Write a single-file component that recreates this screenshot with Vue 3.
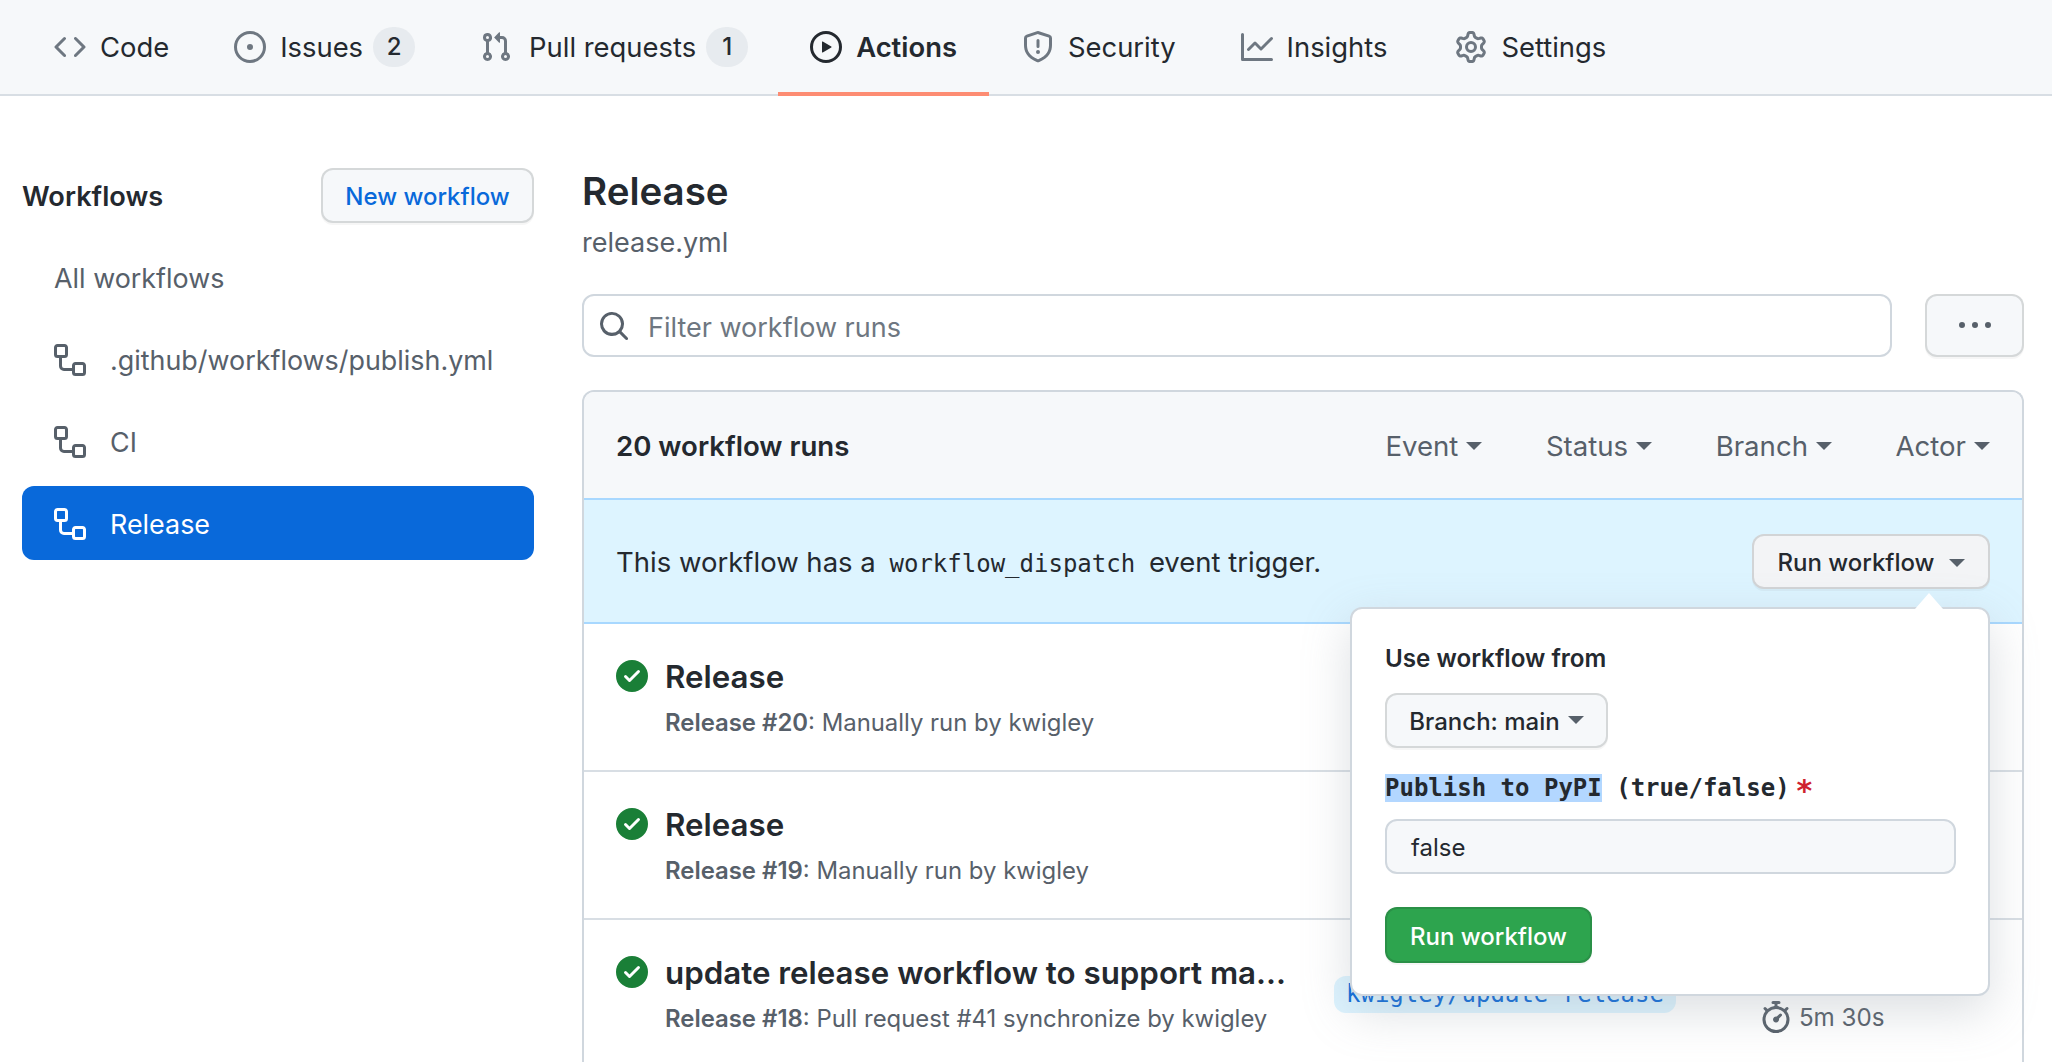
<script setup>
const icons = {
  code: 'm11.28 3.22 4.25 4.25a.75.75 0 0 1 0 1.06l-4.25 4.25a.749.749 0 0 1-1.275-.326.749.749 0 0 1 .215-.734L13.94 8l-3.72-3.72a.749.749 0 0 1 .326-1.275.749.749 0 0 1 .734.215Zm-6.56 0a.751.751 0 0 1 1.042.018.751.751 0 0 1 .018 1.042L2.06 8l3.72 3.72a.749.749 0 0 1-.326 1.275.749.749 0 0 1-.734-.215L.47 8.53a.75.75 0 0 1 0-1.06Z',
  issue: 'M8 9.5a1.5 1.5 0 1 0 0-3 1.5 1.5 0 0 0 0 3ZM8 0a8 8 0 1 1 0 16A8 8 0 0 1 8 0ZM1.5 8a6.5 6.5 0 1 0 13 0 6.5 6.5 0 0 0-13 0Z',
  pull: 'M1.5 3.25a2.25 2.25 0 1 1 3 2.122v5.256a2.251 2.251 0 1 1-1.5 0V5.372A2.25 2.25 0 0 1 1.5 3.25Zm5.677-.177L9.573.677A.25.25 0 0 1 10 .854V2.5h1A2.5 2.5 0 0 1 13.5 5v5.628a2.251 2.251 0 1 1-1.5 0V5a1 1 0 0 0-1-1h-1v1.646a.25.25 0 0 1-.427.177L7.177 3.427a.25.25 0 0 1 0-.354ZM3.75 2.5a.75.75 0 1 0 0 1.5.75.75 0 0 0 0-1.5Zm0 9.5a.75.75 0 1 0 0 1.5.75.75 0 0 0 0-1.5Zm8.25.75a.75.75 0 1 0 1.5 0 .75.75 0 0 0-1.5 0Z',
  play: 'M8 0a8 8 0 1 1 0 16A8 8 0 0 1 8 0ZM1.5 8a6.5 6.5 0 1 0 13 0 6.5 6.5 0 0 0-13 0Zm4.879-2.773 4.264 2.559a.25.25 0 0 1 0 .428l-4.264 2.559A.25.25 0 0 1 6 10.559V5.442a.25.25 0 0 1 .379-.215Z',
  shield: 'M7.467.133a1.748 1.748 0 0 1 1.066 0l5.25 1.68A1.75 1.75 0 0 1 15 3.48V7c0 1.566-.32 3.182-1.303 4.682-.983 1.498-2.585 2.813-5.032 3.855a1.697 1.697 0 0 1-1.33 0c-2.447-1.042-4.049-2.357-5.032-3.855C1.32 10.182 1 8.566 1 7V3.48a1.75 1.75 0 0 1 1.217-1.667Zm.61 1.429a.25.25 0 0 0-.153 0l-5.25 1.68a.25.25 0 0 0-.174.238V7c0 1.358.275 2.666 1.057 3.86.784 1.194 2.121 2.34 4.366 3.297a.196.196 0 0 0 .154 0c2.245-.956 3.582-2.104 4.366-3.298C13.225 9.666 13.5 8.36 13.5 7V3.48a.251.251 0 0 0-.174-.237l-5.25-1.68ZM8.75 4.75v3a.75.75 0 0 1-1.5 0v-3a.75.75 0 0 1 1.5 0ZM9 10.5a1 1 0 1 1-2 0 1 1 0 0 1 2 0Z',
  graph: 'M1.5 1.75V13.5h13.75a.75.75 0 0 1 0 1.5H.75a.75.75 0 0 1-.75-.75V1.75a.75.75 0 0 1 1.5 0Zm14.28 2.53-5.25 5.25a.75.75 0 0 1-1.06 0L7 7.06 4.28 9.78a.751.751 0 0 1-1.042-.018.751.751 0 0 1-.018-1.042l3.25-3.25a.75.75 0 0 1 1.06 0L10 7.94l4.72-4.72a.751.751 0 0 1 1.042.018.751.751 0 0 1 .018 1.042Z',
  gear: 'M8 0a8.2 8.2 0 0 1 .701.031C9.444.095 9.99.645 10.16 1.29l.288 1.107c.018.066.079.158.212.224.231.114.454.243.668.386.123.082.233.09.299.071l1.103-.303c.644-.176 1.392.021 1.82.63.27.385.506.792.704 1.218.315.675.111 1.422-.364 1.891l-.814.806c-.049.048-.098.147-.088.294.016.257.016.515 0 .772-.01.147.038.246.088.294l.814.806c.475.469.679 1.216.364 1.891a7.977 7.977 0 0 1-.704 1.217c-.428.61-1.176.807-1.82.63l-1.102-.302c-.067-.019-.177-.011-.3.071a5.909 5.909 0 0 1-.668.386c-.133.066-.194.158-.211.224l-.29 1.106c-.168.646-.715 1.196-1.458 1.26a8.006 8.006 0 0 1-1.402 0c-.743-.064-1.289-.614-1.458-1.26l-.289-1.106c-.018-.066-.079-.158-.212-.224a5.738 5.738 0 0 1-.668-.386c-.123-.082-.233-.09-.299-.071l-1.103.303c-.644.176-1.392-.021-1.82-.63a8.12 8.12 0 0 1-.704-1.218c-.315-.675-.111-1.422.363-1.891l.815-.806c.05-.048.098-.147.088-.294a6.214 6.214 0 0 1 0-.772c.01-.147-.038-.246-.088-.294l-.815-.806C.635 6.045.431 5.298.746 4.623a7.92 7.92 0 0 1 .704-1.217c.428-.61 1.176-.807 1.82-.63l1.102.302c.067.019.177.011.3-.071.214-.143.437-.272.668-.386.133-.066.194-.158.211-.224l.29-1.106C6.009.645 6.556.095 7.299.03 7.53.01 7.764 0 8 0Zm-.571 1.525c-.036.003-.108.036-.137.146l-.289 1.105c-.147.561-.549.967-.998 1.189-.173.086-.34.183-.5.29-.417.278-.97.423-1.529.27l-1.103-.303c-.109-.03-.175.016-.195.045-.22.312-.412.644-.573.99-.014.031-.021.11.059.19l.815.806c.411.406.562.957.53 1.456a4.709 4.709 0 0 0 0 .582c.032.499-.119 1.05-.53 1.456l-.815.806c-.081.08-.073.159-.059.19.162.346.353.677.573.989.02.03.085.076.195.046l1.102-.303c.56-.153 1.113-.008 1.53.27.161.107.328.204.501.29.447.222.85.629.997 1.189l.289 1.105c.029.109.101.143.137.146a6.6 6.6 0 0 0 1.142 0c.036-.003.108-.036.137-.146l.289-1.105c.147-.561.549-.967.998-1.189.173-.086.34-.183.5-.29.417-.278.97-.423 1.529-.27l1.103.303c.109.029.175-.016.195-.045.22-.313.411-.644.573-.99.014-.031.021-.11-.059-.19l-.815-.806c-.411-.406-.562-.957-.53-1.456a4.709 4.709 0 0 0 0-.582c-.032-.499.119-1.05.53-1.456l.815-.806c.081-.08.073-.159.059-.19a6.464 6.464 0 0 0-.573-.989c-.02-.03-.085-.076-.195-.046l-1.102.303c-.56.153-1.113.008-1.53-.27a4.44 4.44 0 0 0-.501-.29c-.447-.222-.85-.629-.997-1.189l-.289-1.105c-.029-.11-.101-.143-.137-.146a6.6 6.6 0 0 0-1.142 0ZM11 8a3 3 0 1 1-6 0 3 3 0 0 1 6 0ZM9.5 8a1.5 1.5 0 1 0-3.001.001A1.5 1.5 0 0 0 9.5 8Z',
  workflow: 'M0 1.75C0 .784.784 0 1.75 0h3.5C6.216 0 7 .784 7 1.75v3.5A1.75 1.75 0 0 1 5.25 7H4v4a1 1 0 0 0 1 1h4v-1.25C9 9.784 9.784 9 10.75 9h3.5c.966 0 1.75.784 1.75 1.75v3.5A1.75 1.75 0 0 1 14.25 16h-3.5A1.75 1.75 0 0 1 9 14.25v-.75H5A2.5 2.5 0 0 1 2.5 11V7h-.75A1.75 1.75 0 0 1 0 5.25Zm1.75-.25a.25.25 0 0 0-.25.25v3.5c0 .138.112.25.25.25h3.5a.25.25 0 0 0 .25-.25v-3.5a.25.25 0 0 0-.25-.25Zm9 9a.25.25 0 0 0-.25.25v3.5c0 .138.112.25.25.25h3.5a.25.25 0 0 0 .25-.25v-3.5a.25.25 0 0 0-.25-.25Z',
  search: 'M10.68 11.74a6 6 0 0 1-7.922-8.982 6 6 0 0 1 8.982 7.922l3.04 3.04a.749.749 0 0 1-.326 1.275.749.749 0 0 1-.734-.215ZM11.5 7a4.499 4.499 0 1 0-8.997 0A4.499 4.499 0 0 0 11.5 7Z',
  kebab: 'M8 9a1.5 1.5 0 1 0 0-3 1.5 1.5 0 0 0 0 3ZM1.5 9a1.5 1.5 0 1 0 0-3 1.5 1.5 0 0 0 0 3Zm13 0a1.5 1.5 0 1 0 0-3 1.5 1.5 0 0 0 0 3Z',
  check: 'M8 16A8 8 0 1 1 8 0a8 8 0 0 1 0 16Zm3.78-9.72a.751.751 0 0 0-.018-1.042.751.751 0 0 0-1.042-.018L6.75 9.19 5.28 7.72a.751.751 0 0 0-1.042.018.751.751 0 0 0-.018 1.042l2 2a.75.75 0 0 0 1.06 0Z',
  watch: 'M5.75.75A.75.75 0 0 1 6.5 0h3a.75.75 0 0 1 0 1.5h-.75v1l-.001.041a6.724 6.724 0 0 1 3.464 1.435l.007-.006.75-.75a.749.749 0 0 1 1.275.326.749.749 0 0 1-.215.734l-.75.75-.006.007a6.75 6.75 0 1 1-10.548 0L2.72 5.03l-.75-.75a.751.751 0 0 1 .018-1.042.751.751 0 0 1 1.042-.018l.75.75.007.006A6.72 6.72 0 0 1 7.25 2.541V1.5H6.5a.75.75 0 0 1-.75-.75ZM8 14.5a5.25 5.25 0 1 0-.001-10.501A5.25 5.25 0 0 0 8 14.5Zm.389-6.7 1.33-1.33a.75.75 0 1 1 1.061 1.06L9.45 8.861A1.503 1.503 0 0 1 8 10.75a1.499 1.499 0 1 1 .389-2.95Z'
}
const tabs = [
  { label: 'Code', icon: 'code' },
  { label: 'Issues', icon: 'issue', count: 2 },
  { label: 'Pull requests', icon: 'pull', count: 1 },
  { label: 'Actions', icon: 'play', active: true },
  { label: 'Security', icon: 'shield' },
  { label: 'Insights', icon: 'graph' },
  { label: 'Settings', icon: 'gear' }
]
const workflows = [
  { label: '.github/workflows/publish.yml' },
  { label: 'CI' },
  { label: 'Release', selected: true }
]
const filters = ['Event', 'Status', 'Branch', 'Actor']
const runs = [
  { title: 'Release', num: 'Release #20', desc: ': Manually run by kwigley' },
  { title: 'Release', num: 'Release #19', desc: ': Manually run by kwigley' },
  { title: 'update release workflow to support ma...', num: 'Release #18', desc: ': Pull request #41 synchronize by kwigley', branch: 'kwigley/update-release', time: '5m 30s' }
]
</script>

<template>
  <div class="page">
    <nav class="nav">
      <a v-for="t in tabs" :key="t.label" class="tab" :class="{ active: t.active }">
        <svg class="ic" viewBox="0 0 16 16"><path :d="icons[t.icon]" /></svg>
        <span class="tab-label">{{ t.label }}</span>
        <span v-if="t.count" class="counter">{{ t.count }}</span>
      </a>
    </nav>

    <div class="content">
      <aside class="side">
        <div class="side-head">
          <h2>Workflows</h2>
          <button class="btn new">New workflow</button>
        </div>
        <ul class="wf-list">
          <li class="wf">All workflows</li>
          <li v-for="w in workflows" :key="w.label" class="wf" :class="{ selected: w.selected }">
            <svg class="ic" viewBox="0 0 16 16"><path :d="icons.workflow" /></svg>
            <span>{{ w.label }}</span>
          </li>
        </ul>
      </aside>

      <main class="main">
        <h1>Release</h1>
        <div class="file">release.yml</div>
        <div class="search-row">
          <div class="search">
            <svg class="ic" viewBox="0 0 16 16"><path :d="icons.search" /></svg>
            <span class="placeholder">Filter workflow runs</span>
          </div>
          <button class="btn more">
            <svg class="ic" viewBox="0 0 16 16"><path :d="icons.kebab" /></svg>
          </button>
        </div>

        <section class="box">
          <header class="box-head">
            <strong>20 workflow runs</strong>
            <div class="filters">
              <span v-for="f in filters" :key="f" class="filter">{{ f }}<i class="caret"></i></span>
            </div>
          </header>
          <div class="banner">
            <span class="banner-text">This workflow has a <code>workflow_dispatch</code> event trigger.</span>
            <div class="run-wrap">
              <button class="btn run-toggle">Run workflow<i class="caret"></i></button>
              <div class="popover">
                <div class="pop-label">Use workflow from</div>
                <button class="btn branch">Branch: main<i class="caret"></i></button>
                <div class="mono-label"><mark>Publish to PyPI</mark> (true/false)<em>*</em></div>
                <div class="pop-input">false</div>
                <button class="btn go">Run workflow</button>
              </div>
            </div>
          </div>
          <div v-for="r in runs" :key="r.num" class="run">
            <svg class="ic ok" viewBox="0 0 16 16"><path :d="icons.check" /></svg>
            <div class="run-main">
              <div class="run-title">{{ r.title }}</div>
              <div class="run-sub"><b>{{ r.num }}</b>{{ r.desc }}</div>
            </div>
            <span v-if="r.branch" class="tag">{{ r.branch }}</span>
            <span v-if="r.time" class="time">
              <svg class="ic" viewBox="0 0 16 16"><path :d="icons.watch" /></svg>{{ r.time }}
            </span>
          </div>
        </section>
      </main>
    </div>
  </div>
</template>

<style>
html, body { margin: 0; background: #fff; overflow: hidden; }
</style>

<style scoped>
* { box-sizing: border-box; }
.page {
  width: 2052px; height: 1062px; overflow: hidden;
  font-family: Inter, "Liberation Sans", sans-serif;
  font-size: 27px; color: #24292f;
}
.ic { width: 32px; height: 32px; fill: currentColor; flex: none; fill-rule: evenodd; display: block; }

.nav {
  display: flex; height: 96px; padding-left: 22px; gap: 1px; font-size: 27.4px;
  background: #f6f8fa; box-shadow: inset 0 -2px 0 #d8dee4;
}
.tab { position: relative; display: flex; align-items: center; padding: 0 32px 2px; color: #24292f; }
.tab .ic { color: #6e7781; margin-right: 14px; }
.tab:nth-child(3) .ic { margin-right: 17px; }
.tab:last-child { margin-left: 3px; }
.tab.active { font-weight: 600; margin-left: -3px; }
.tab.active .ic { color: #24292f; }
.tab.active::after { content: ""; position: absolute; left: 0; right: 0; bottom: 0; height: 4px; background: #fd8c73; }
.counter {
  margin-left: 10px; min-width: 42px; height: 40px; line-height: 40px; text-align: center;
  border-radius: 20px; background: rgba(175,184,193,.2); font-size: 24px; font-weight: 500;
}

.content { display: flex; align-items: flex-start; }
.side { width: 512px; margin: 72px 0 0 22px; flex: none; }
.side-head { display: flex; align-items: center; justify-content: space-between; height: 55px; }
.side-head h2 { margin: 0; padding-top: 2px; font-size: 27.2px; font-weight: 600; }
.btn {
  font: inherit; font-size: 24px; font-weight: 500; color: #24292f; background: #f6f8fa;
  border: 2px solid rgba(27,31,36,.15); border-radius: 12px;
  box-shadow: 0 2px 0 rgba(27,31,36,.04); display: flex; align-items: center; justify-content: center; padding: 2px 0 0;
}
.new { width: 213px; height: 55px; color: #0969da; }
.wf-list { list-style: none; margin: 17px 0 0; padding: 0; display: flex; flex-direction: column; gap: 8px; font-size: 26.9px; }
.wf { height: 74px; padding: 1px 0 0 32px; display: flex; align-items: center; gap: 24px; color: #57606a; border-radius: 12px; }
.wf.selected { background: #0969da; color: #fff; }

.main { width: 1442px; margin-left: 48px; flex: none; }
h1 { margin: 65px 0 0; font-size: 38.5px; font-weight: 600; line-height: 60px; }
.file { line-height: 40px; margin-top: 2px; color: #57606a; }
.search-row { display: flex; gap: 33px; margin-top: 31px; }
.search {
  flex: 1; height: 63px; border: 2px solid #d0d7de; border-radius: 12px;
  display: flex; align-items: center; gap: 18px; padding-left: 14px; color: #6e7781;
}
.placeholder { padding-top: 3px; }
.search .ic { color: #57606a; }
.more { width: 99px; height: 63px; color: #57606a; padding: 0; }

.box { margin-top: 33px; border: 2px solid #d0d7de; border-bottom: 0; border-radius: 12px 12px 0 0; }
.box-head {
  height: 106px; background: #f6f8fa; border-radius: 10px 10px 0 0;
  display: flex; align-items: center; justify-content: space-between; padding: 1px 32px 0; font-size: 27.6px;
}
.box-head strong { font-weight: 600; }
.filters { display: flex; gap: 63.5px; color: #57606a; }
.filter { display: flex; align-items: center; gap: 8px; }
.caret { display: block; width: 0; height: 0; border: 8px solid transparent; border-top-color: currentColor; border-bottom: 0; }

.banner {
  height: 126px; background: #ddf4ff; border-top: 2px solid #a8d8ff; border-bottom: 2px solid #a8d8ff;
  display: flex; align-items: center; justify-content: space-between; padding: 1px 32px 0; 
}
.banner-text { font-size: 27.5px; }
code { font-family: "DejaVu Sans Mono", monospace; font-size: 24px; margin: 0 6px; }
.run-wrap { position: relative; }
.run-toggle { width: 238px; height: 55px; background: #f3f4f6; gap: 14px; }
.run-toggle .caret { color: #57606a; }
.popover {
  position: absolute; top: 73px; right: 0; width: 640px; height: 389px; z-index: 5;
  background: #fff; border: 2px solid #d0d7de; border-radius: 12px;
  box-shadow: 0 16px 48px rgba(140,149,159,.3); padding: 33px 33px 0;
}
.popover::before {
  content: ""; position: absolute; top: -16px; right: 45px; width: 28px; height: 16px;
  background: #fff; clip-path: polygon(50% 0, 100% 100%, 0 100%);
}
.pop-label { font-weight: 600; font-size: 24.2px; line-height: 34px; }
.branch { width: 223px; height: 55px; margin-top: 17px; gap: 8px; }
.branch .caret { color: #57606a; margin-top: -4px; }
.mono-label { font-family: "DejaVu Sans Mono", monospace; font-weight: 700; font-size: 24px; line-height: 29px; margin-top: 26px; }
mark { background: #b3d7ff; color: inherit; }
em {
  color: #cf222e; font-style: normal; font-family: "DejaVu Sans", sans-serif; font-weight: 700;
  font-size: 30px; line-height: 0; margin-left: 7px; vertical-align: -5px;
}
.pop-input {
  width: 571px; height: 55px; margin-top: 16px; border: 2px solid #d0d7de; border-radius: 12px;
  background: #f6f8fa; display: flex; align-items: center; padding: 1px 0 0 24px; font-size: 24px;
}
.go { width: 207px; height: 56px; margin-top: 33px; background: #2da44e; color: #fff; }

.run {
  height: 148px; border-bottom: 2px solid #d8dee4; padding: 36px 0 0 32px;
  display: flex; align-items: flex-start; background: #fff;
}
.ok { color: #1a7f37; }
.run-main { width: 669px; margin-left: 17px; flex: none; }
.run-title { font-size: 31.3px; font-weight: 600; line-height: 34px; white-space: nowrap; }
.run-sub { font-size: 23.9px; line-height: 34px; margin-top: 12px; color: #57606a; white-space: nowrap; }
.run-sub b { font-weight: 600; }
.tag {
  margin-top: 20px; height: 37px; line-height: 37px; padding: 0 12px; border-radius: 12px;
  background: #ddf4ff; color: #0969da; font-family: "DejaVu Sans Mono", monospace; font-size: 24px;
}
.time { margin: 45px 0 0 84px; display: flex; align-items: center; gap: 7px; color: #57606a; font-size: 24.2px; }
</style>
